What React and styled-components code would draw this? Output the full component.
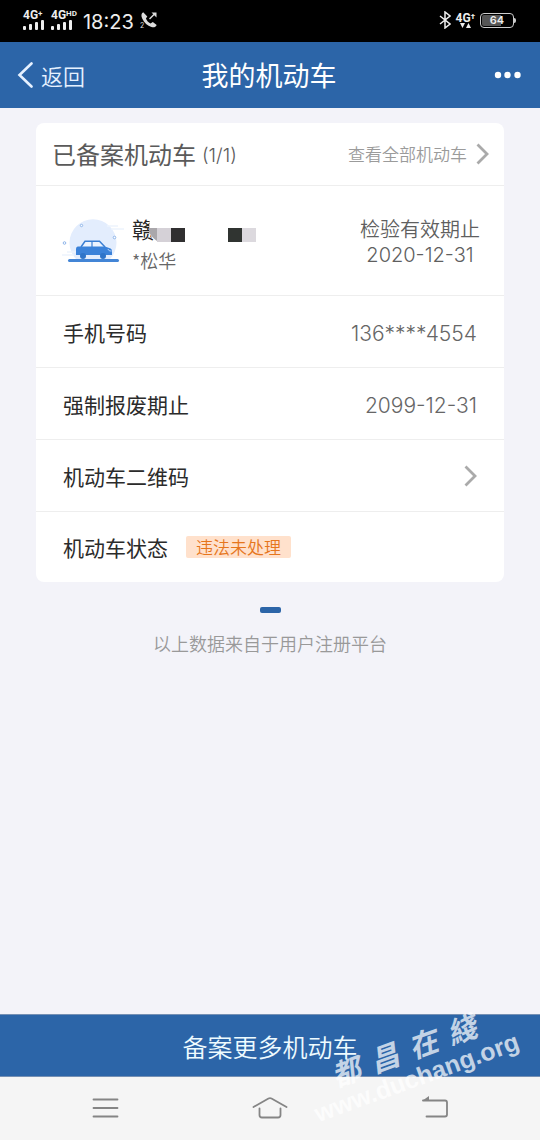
import React from 'react'
import styled, { createGlobalStyle } from 'styled-components'

const cjk = "'Noto Sans CJK SC', sans-serif"

const GlobalStyle = createGlobalStyle`
  * {
    box-sizing: border-box;
  }

  body {
    margin: 0;
    background: #f3f3f9;
    font-family: Inter, 'Noto Sans CJK SC', sans-serif;
  }

  button {
    margin: 0;
    padding: 0;
    border: 0;
    background: none;
    color: inherit;
    font: inherit;
    cursor: pointer;
  }

  svg {
    display: block;
    flex: none;
  }
`

const Page = styled.div`
  min-height: 100vh;
  display: flex;
  flex-direction: column;
  overflow: hidden;
`

const StatusBar = styled.div`
  height: 42px;
  padding: 0 26px 2px 23px;
  display: flex;
  align-items: center;
  justify-content: space-between;
  background: #000;
  color: #eee;
`

const StatusGroup = styled.div`
  display: flex;
  align-items: center;
  gap: ${props => props.gap}px;
`

const Signal = styled.div`
  display: flex;
  flex-direction: column;
  align-items: ${props => props.align || 'flex-start'};
`

const Network = styled.span`
  display: flex;
  font-family: Roboto, sans-serif;
  font-size: 12px;
  font-weight: 700;
  line-height: 10px;

  sup {
    font-size: 8px;
    line-height: 7px;
    vertical-align: top;
  }
`

const Time = styled.span`
  padding-top: 3px;
  font-size: 20px;
  line-height: 24px;
`

const Battery = styled.div`
  position: relative;
  width: 34px;
  height: 15px;
  border: 1px solid #ccc;
  border-radius: 4px;
  background: linear-gradient(to right, #555 64%, #000 64%);
  background-clip: content-box;
  padding: 1px;
  font-size: 11px;
  font-weight: 600;
  line-height: 11px;
  text-align: center;

  &::after {
    content: '';
    position: absolute;
    top: 4px;
    right: -3px;
    width: 2px;
    height: 5px;
    border-radius: 0 2px 2px 0;
    background: #ccc;
  }
`

const Header = styled.header`
  height: 66px;
  padding: 0 19px 0 17px;
  display: grid;
  grid-template-columns: 1fr auto 1fr;
  align-items: center;
  background: #2c65a8;
  color: #fff;
`

const BackButton = styled.button`
  justify-self: start;
  display: flex;
  align-items: center;
  gap: 8px;
  color: #e6f1ff;
  font-family: ${cjk};
  font-size: 22px;
  font-weight: 350;
  line-height: 32px;
`

const Title = styled.h1`
  margin: 0;
  font-family: ${cjk};
  font-size: 27px;
  font-weight: 400;
  line-height: 40px;
`

const MoreButton = styled.button`
  justify-self: end;
`

const Main = styled.main`
  flex: 1;
  padding: 15px 36px;
`

const Card = styled.section`
  border-radius: 8px;
  background: #fff;
`

const CardHeader = styled.div`
  height: 63px;
  padding: 0 15px 0 16px;
  display: flex;
  align-items: center;
  justify-content: space-between;
  border-bottom: 1px solid #eee;
`

const CardTitle = styled.h2`
  margin: 0;
  display: flex;
  align-items: center;
  gap: 6px;
  color: #5a5a5a;
  font-family: ${cjk};
  font-size: 24px;
  font-weight: 400;
  line-height: 36px;
`

const Count = styled.span`
  padding-top: 3px;
  font-family: Inter, sans-serif;
  font-size: 19px;
  font-weight: 350;
`

const ViewAll = styled.a`
  display: flex;
  align-items: center;
  gap: 9px;
  color: #9b9b9b;
  font-family: ${cjk};
  font-size: 17px;
  font-weight: 350;
  line-height: 24px;
  text-decoration: none;
`

const Vehicle = styled.div`
  height: 110px;
  padding: 0 24px;
  display: flex;
  align-items: center;
  border-bottom: 1px solid #eee;
`

const VehicleInfo = styled.div`
  flex: 1;
  padding: 6px 0 0 8px;
`

const Plate = styled.div`
  display: flex;
  align-items: center;
  color: #262626;
  font-family: ${cjk};
  font-size: 22px;
  line-height: 32px;
`

const Mask = styled.span`
  position: relative;
  margin-left: -5px;
`

const Owner = styled.div`
  color: #666;
  font-family: ${cjk};
  font-size: 18px;
  font-weight: 350;
  line-height: 32px;
`

const Validity = styled.div`
  padding-top: 5px;
  color: #5f5f5f;
  font-size: 20px;
  font-weight: 350;
  line-height: 25px;
  text-align: center;
`

const Row = styled.div`
  width: 100%;
  height: ${props => (props.$last ? 70 : 72)}px;
  padding: 0 27px;
  display: flex;
  align-items: center;
  justify-content: ${props => (props.$last ? 'flex-start' : 'space-between')};
  gap: 18px;
  border-bottom: ${props => (props.$last ? 0 : 1)}px solid #eee;
`

const Label = styled.span`
  color: #2b2b2b;
  font-family: ${cjk};
  font-size: 21px;
  line-height: 30px;
`

const Value = styled.span`
  padding-top: 4px;
  color: #666;
  font-size: 21px;
  font-weight: 350;
  line-height: 30px;
`

const Tag = styled.span`
  padding: 0 10px;
  border-radius: 2px;
  background: #ffe1cc;
  color: #e6761c;
  font-family: ${cjk};
  font-size: 17px;
  font-weight: 350;
  line-height: 22px;
`

const Indicator = styled.div`
  width: 21px;
  height: 6px;
  margin: 25px auto 17px;
  border-radius: 2px;
  background: #2c65a8;
`

const Note = styled.p`
  margin: 0;
  color: #999;
  font-family: ${cjk};
  font-size: 18px;
  font-weight: 350;
  line-height: 26px;
  text-align: center;
`

const Bottom = styled.footer`
  position: relative;
`

const AddButton = styled.button`
  width: 100%;
  height: 63px;
  display: block;
  border: solid #7590b4;
  border-width: 1px 0;
  background: #2c65a8;
  color: #eefbff;
  font-family: ${cjk};
  font-size: 25px;
  font-weight: 350;
  line-height: 36px;
`

const NavBar = styled.nav`
  height: 63px;
  padding: 0 88px 2px;
  display: flex;
  align-items: center;
  justify-content: space-between;
  background: #f5f5f5;
  color: #858585;
`

const Watermark = styled.div`
  position: absolute;
  right: 18px;
  bottom: 47px;
  width: 222px;
  transform: rotate(-20deg);
  color: rgba(255, 255, 255, 0.72);
  pointer-events: none;
`

const WatermarkName = styled.div`
  padding: 0 38px 0 32px;
  display: flex;
  justify-content: space-between;
  font-family: 'Noto Sans CJK TC', sans-serif;
  font-size: 29px;
  font-style: italic;
  font-weight: 700;
  line-height: 32px;
`

const WatermarkSite = styled.div`
  font-family: 'Liberation Sans', Arial, sans-serif;
  font-size: 25px;
  font-weight: 700;
  line-height: 30px;
  text-align: center;
`

const SignalBars = () => (
  <svg width="22" height="10" viewBox="0 0 22 10" fill="currentColor">
    <rect x="0" y="6" width="3" height="4" rx="1" />
    <rect x="6" y="4" width="3" height="6" rx="1" />
    <rect x="12" y="2" width="3" height="8" rx="1" />
    <rect x="18" y="0" width="3" height="10" rx="1" />
  </svg>
)

const CallIcon = () => (
  <svg width="18" height="18" viewBox="0 0 18 18">
    <path
      d="M3.2 1.200C1.200 2.400.9 4.700 2.200 7.500c2 4.300 5.300 7.300 9.300 8.500 2.500.7 4.300-.1 5.200-2.100l-3.900-2.800-2.300 1.400C8.300 11.300 6.800 9.600 5.900 7.400l1.400-2z"
      fill="#ddd"
    />
    <path d="M9.500 8 14.500 3" fill="none" stroke="#ddd" strokeWidth="1.500" />
    <path d="M11.500 1.500h5v5z" fill="#ddd" />
    <text x="0" y="17" fill="#ddd" fontSize="7">2</text>
  </svg>
)

const BluetoothIcon = () => (
  <svg width="12" height="18" viewBox="0 0 12 18" fill="none" stroke="currentColor" strokeWidth="1.500">
    <path d="M1 5 11 13 6 17V1l5 4L1 13" />
  </svg>
)

const DataArrows = () => (
  <svg width="11" height="5" viewBox="0 0 11 5" fill="currentColor">
    <path d="M0 0h5L2.500 5zM6 5h5L8.500 0z" />
  </svg>
)

const BackIcon = () => (
  <svg width="16" height="26" viewBox="0 0 16 26" fill="none" stroke="currentColor" strokeWidth="2.600">
    <path d="M14.500 1.500 2.500 13l12 11.500" strokeLinecap="round" />
  </svg>
)

const MoreIcon = () => (
  <svg width="27" height="8" viewBox="0 0 27 8" fill="currentColor">
    <circle cx="4" cy="4" r="3.200" />
    <circle cx="13.500" cy="4" r="3.200" />
    <circle cx="23.500" cy="4" r="3.200" />
  </svg>
)

const ChevronRight = () => (
  <svg width="13" height="22" viewBox="0 0 13 22" fill="none" stroke="#aaa" strokeWidth="2.800">
    <path d="M1.500 1.500 11 11l-9.500 9.500" />
  </svg>
)

const CarPicture = () => (
  <svg width="64" height="48" viewBox="0 0 64 48">
    <path d="M16 42a23.500 23.500 0 1 1 34 0z" fill="#e3edfd" />
    <path d="M47 9h11M51 12h13M2 38h12M7 35h9" stroke="#edf3fd" strokeWidth="1.500" />
    <g fill="#fff" stroke="#8fb6ea" strokeWidth="1">
      <circle cx="21.500" cy="8.500" r="1.200" />
      <circle cx="4.500" cy="26" r="1.300" />
      <circle cx="54.500" cy="20.500" r="1.300" />
    </g>
    <path d="M21 30 25 24.300h14.500L45 30" fill="#edf4ff" stroke="#3b7fd3" strokeWidth="1.500" />
    <path d="M32 24.500v6" stroke="#3b7fd3" strokeWidth="1.200" />
    <path d="M18 29.500h27l5.500 2c1.200.6 1.500 1.500 1.500 3v3.500H16v-5.500c0-2 .6-3 2-3z" fill="#3b82d9" />
    <path d="M48 32c.4 1.500 1.400 2 3.500 2" fill="none" stroke="#b9d4f7" />
    <circle cx="23" cy="39" r="3" fill="#2f74c8" />
    <circle cx="43" cy="39" r="3" fill="#2f74c8" />
    <rect x="8" y="42" width="51" height="3" rx="1.500" fill="#4385d6" />
  </svg>
)

const PlateMask = () => (
  <svg width="108" height="28" viewBox="0 0 108 28">
    <path d="M1 0h107v28H8Q2 24 0 18z" fill="#fff" />
    <path d="M0 14h8v13Q3 24 0 18z" fill="#aaa7ab" />
    <path d="M8 14h14v14H8z" fill="#d5d1d7" />
    <path d="M22 14h14v14H22z" fill="#302f30" />
    <path d="M79 14h14v14H79z" fill="#303431" />
    <path d="M93 14h14v14H93z" fill="#dcd9de" />
  </svg>
)

const MenuIcon = () => (
  <svg width="36" height="24" viewBox="0 0 36 24" fill="none" stroke="currentColor" strokeWidth="1.800">
    <path d="M5.500 3.500h24M5.500 12h24M5.500 20.500h24" strokeLinecap="round" />
  </svg>
)

const HomeIcon = () => (
  <svg width="36" height="24" viewBox="0 0 36 24" fill="none" stroke="currentColor" strokeWidth="1.800">
    <path
      d="M1.500 11 16.500 2.500q1.500-.8 3 0L34.500 11M7.500 12.500V19q0 2.500 2.500 2.500h16q2.500 0 2.500-2.500v-6.500"
      strokeLinecap="round"
    />
  </svg>
)

const ReturnIcon = () => (
  <svg width="36" height="24" viewBox="0 0 36 24" fill="none" stroke="currentColor" strokeWidth="1.800">
    <path d="M7 4.500h22q2 0 2 2v12q0 2-2 2H10.500" strokeLinecap="round" />
    <path d="M6 5 13 0v5z" fill="currentColor" stroke="none" />
  </svg>
)

const App = () => (
  <Page>
    <GlobalStyle />
    <StatusBar>
      <StatusGroup gap={6}>
        <Signal>
          <Network>4G<sup>+</sup></Network>
          <SignalBars />
        </Signal>
        <Signal>
          <Network>4G<sup>HD</sup></Network>
          <SignalBars />
        </Signal>
        <Time>18:23</Time>
        <CallIcon />
      </StatusGroup>
      <StatusGroup gap={5}>
        <BluetoothIcon />
        <Signal align="center">
          <Network>4G<sup>†</sup></Network>
          <DataArrows />
        </Signal>
        <Battery>64</Battery>
      </StatusGroup>
    </StatusBar>

    <Header>
      <BackButton>
        <BackIcon />
        返回
      </BackButton>
      <Title>我的机动车</Title>
      <MoreButton aria-label="更多">
        <MoreIcon />
      </MoreButton>
    </Header>

    <Main>
      <Card>
        <CardHeader>
          <CardTitle>
            已备案机动车
            <Count>(1/1)</Count>
          </CardTitle>
          <ViewAll href="#all">
            查看全部机动车
            <ChevronRight />
          </ViewAll>
        </CardHeader>
        <Vehicle>
          <CarPicture />
          <VehicleInfo>
            <Plate>
              <span>赣</span>
              <Mask>
                <PlateMask />
              </Mask>
            </Plate>
            <Owner>*松华</Owner>
          </VehicleInfo>
          <Validity>
            检验有效期止
            <br />
            2020-12-31
          </Validity>
        </Vehicle>
        <Row>
          <Label>手机号码</Label>
          <Value>136****4554</Value>
        </Row>
        <Row>
          <Label>强制报废期止</Label>
          <Value>2099-12-31</Value>
        </Row>
        <Row as="button">
          <Label>机动车二维码</Label>
          <ChevronRight />
        </Row>
        <Row $last>
          <Label>机动车状态</Label>
          <Tag>违法未处理</Tag>
        </Row>
      </Card>
      <Indicator />
      <Note>以上数据来自于用户注册平台</Note>
    </Main>

    <Bottom>
      <AddButton>备案更多机动车</AddButton>
      <NavBar>
        <button aria-label="菜单">
          <MenuIcon />
        </button>
        <button aria-label="主页">
          <HomeIcon />
        </button>
        <button aria-label="返回上一页">
          <ReturnIcon />
        </button>
      </NavBar>
      <Watermark>
        <WatermarkName>
          <span>都</span>
          <span>昌</span>
          <span>在</span>
          <span>綫</span>
        </WatermarkName>
        <WatermarkSite>www.duchang.org</WatermarkSite>
      </Watermark>
    </Bottom>
  </Page>
)

export default App
